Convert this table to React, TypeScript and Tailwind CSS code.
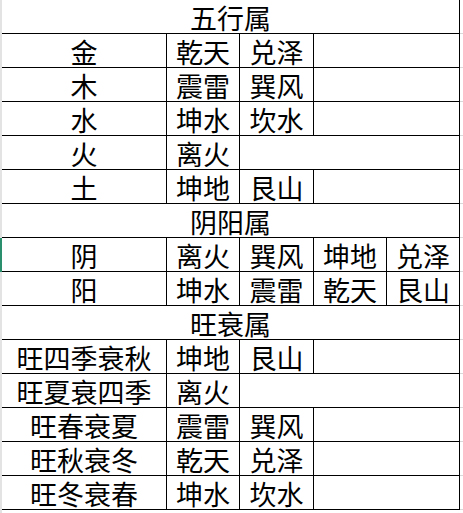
import React from "react";

type Cell = { t?: string; w: number };

const A = 165, B = 73, C = 74, D = 73, E = 73;

const rows: { title?: string; cells?: Cell[]; green?: boolean }[] = [
  { title: "五行属" },
  { cells: [{ t: "金", w: A }, { t: "乾天", w: B }, { t: "兑泽", w: C }, { w: D + E }] },
  { cells: [{ t: "木", w: A }, { t: "震雷", w: B }, { t: "巽风", w: C }, { w: D + E }] },
  { cells: [{ t: "水", w: A }, { t: "坤水", w: B }, { t: "坎水", w: C }, { w: D + E }] },
  { cells: [{ t: "火", w: A }, { t: "离火", w: B }, { w: C + D + E }] },
  { cells: [{ t: "土", w: A }, { t: "坤地", w: B }, { t: "艮山", w: C }, { w: D + E }] },
  { title: "阴阳属" },
  { green: true, cells: [{ t: "阴", w: A }, { t: "离火", w: B }, { t: "巽风", w: C }, { t: "坤地", w: D }, { t: "兑泽", w: E }] },
  { cells: [{ t: "阳", w: A }, { t: "坤水", w: B }, { t: "震雷", w: C }, { t: "乾天", w: D }, { t: "艮山", w: E }] },
  { title: "旺衰属" },
  { cells: [{ t: "旺四季衰秋", w: A }, { t: "坤地", w: B }, { t: "艮山", w: C }, { w: D + E }] },
  { cells: [{ t: "旺夏衰四季", w: A }, { t: "离火", w: B }, { w: C + D + E }] },
  { cells: [{ t: "旺春衰夏", w: A }, { t: "震雷", w: B }, { t: "巽风", w: C }, { w: D + E }] },
  { cells: [{ t: "旺秋衰冬", w: A }, { t: "乾天", w: B }, { t: "兑泽", w: C }, { w: D + E }] },
  { cells: [{ t: "旺冬衰春", w: A }, { t: "坤水", w: B }, { t: "坎水", w: C }, { w: D + E }] },
];

export default function App() {
  return (
    <div
      className="w-[463px] h-[513px] bg-white overflow-hidden flex flex-col text-black text-[27px] leading-none"
      style={{ fontFamily: '"Noto Sans CJK SC", "Noto Sans", sans-serif' }}
    >
      {rows.map((r, i) => (
        <div key={i} className="flex h-[34px]">
          <div className={`w-[2px] h-full ${r.green ? "bg-[#2a8f6c]" : "bg-[#e3e3e3]"}`} />
          {r.title ? (
            <div className="w-[458px] h-full border-r border-b border-black flex items-center justify-center pt-[2px]">
              {r.title}
            </div>
          ) : (
            r.cells!.map((c, j) => (
              <div
                key={j}
                className="h-full border-r border-b border-black flex items-center justify-center pt-[2px]"
                style={{ width: c.w }}
              >
                {c.t}
              </div>
            ))
          )}
          <div className="w-[3px] h-full border-b border-[#d9d9d9]" />
        </div>
      ))}
      <div className="flex flex-1">
        <div className="w-[2px] h-full bg-[#e3e3e3]" />
      </div>
    </div>
  );
}
